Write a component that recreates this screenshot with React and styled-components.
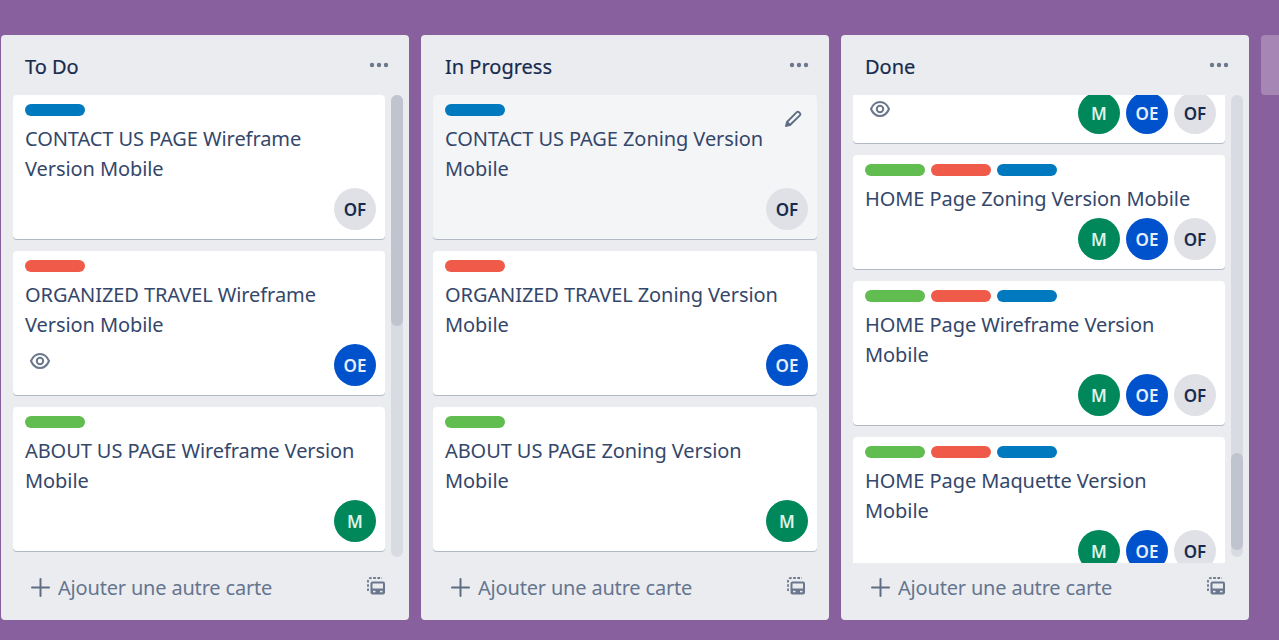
import React from "react";
import styled, { createGlobalStyle } from "styled-components";

const Global = createGlobalStyle`
  html, body { margin: 0; padding: 0; height: 100%; overflow: hidden; }
  body { background: #89609e; font-family: "Noto Sans", "Open Sans", sans-serif; }
`;
const Board = styled.div`
  display: flex; align-items: flex-start; gap: 12px;
  width: 1279px; height: 640px; box-sizing: border-box;
  padding: 35px 0 0 1px; overflow: hidden;
`;
const List = styled.section`
  flex: 0 0 408px; height: 585px; background: #ebecf0; border-radius: 4px;
  display: flex; flex-direction: column; overflow: hidden;
`;
const AddList = styled.div`
  flex: 0 0 408px; height: 60px; border-radius: 4px; background: rgba(255,255,255,.24);
`;
const ListHeader = styled.header`
  height: 60px; flex: none; display: flex; justify-content: space-between;
  padding: 0 20px 0 24px; box-sizing: border-box;
`;
const ListTitle = styled.h2`
  margin: 18px 0 0; font-size: 20px; line-height: 28px; font-weight: 400; color: #172b4d;
  -webkit-text-stroke: 0.2px #172b4d;
`;
const More = styled.svg`width: 20px; height: 6px; margin-top: 27px; fill: #6b778c;`;
const Middle = styled.div`
  flex: none; height: 468px; display: flex; overflow: hidden;
`;
const Cards = styled.div`
  width: ${p => p.$wide ? 384 : 372}px; margin-left: 12px; overflow: hidden; flex: none;
`;
const CardStack = styled.div`
  display: flex; flex-direction: column; gap: 12px; margin-top: ${p => p.$offset || 0}px; padding-bottom: 1px;
`;
const Card = styled.article`
  position: relative; flex: none; background: ${p => p.$hover ? "#f4f5f7" : "#fff"};
  border-radius: 4px; box-shadow: 0 1px 0 rgba(9,30,66,.25);
  padding: 9px 9px 9px 12px;
`;
const Labels = styled.div`display: flex; gap: 6px; margin-bottom: 8px;`;
const Label = styled.span`
  width: 60px; height: 12px; border-radius: 6px; background: ${p => p.$c};
`;
const CardTitle = styled.div`
  font-size: 20px; line-height: 30px; color: #34476a; margin-bottom: 4px;
  padding-right: 16px; letter-spacing: -0.08px;
`;
const Footer = styled.div`display: flex; justify-content: space-between; height: 42px;`;
const Badges = styled.div`padding: 6px 0 0 4px;`;
const EyeIcon = styled.svg`display: block; width: 22px; height: 22px; color: #6b778c;`;
const Avatars = styled.div`display: flex; gap: 6px;`;
const Avatar = styled.span`
  width: 42px; height: 42px; border-radius: 50%; display: flex; align-items: center; justify-content: center;
  font-size: 17px; font-weight: 600; background: ${p => p.$bg}; color: ${p => p.$fg};
`;
const Pencil = styled.svg`
  position: absolute; top: 14px; right: 14px; width: 20px; height: 20px; color: #5e6c84;
`;
const Scrollbar = styled.div`
  width: 12px; height: 462px; margin-left: 6px; flex: none; border-radius: 6px; background: #d9dbe3;
  padding-top: ${p => p.$top}px; box-sizing: border-box;
`;
const Thumb = styled.div`height: ${p => p.$h}px; background: #bfc4ce; border-radius: 6px;`;
const Composer = styled.footer`
  flex: 1; display: flex; align-items: center; justify-content: space-between;
  padding: 0 24px 8px 30px; box-sizing: border-box;
`;
const AddButton = styled.div`
  display: flex; align-items: center; gap: 8px; color: #66758f; font-size: 20px; letter-spacing: -0.18px;
`;
const PlusIcon = styled.svg`width: 19px; height: 19px; color: #5e6c84;`;
const TemplateIcon = styled.svg`width: 18px; height: 18px; color: #6b778c; margin-top: -4px;`;

const BLUE = "#0079bf", RED = "#ef5b48", GREEN = "#61bd4f";
const people = {
  M: ["#00875a", "#dff3ea"],
  OE: ["#0052cc", "#e6eefc"],
  OF: ["#dfe1e6", "#172b4d"],
};

const Eye = () => (
  <EyeIcon viewBox="0 0 22 22" fill="none" stroke="currentColor">
    <path strokeWidth="2" d="M2 11C3.800 6.800 7 4 11 4s7.200 2.800 9 7c-1.800 4.200-5 7-9 7s-7.200-2.800-9-7z" />
    <circle strokeWidth="2" cx="11" cy="11" r="3.200" />
  </EyeIcon>
);

const CardView = ({ labels, title, who, eye, hover }) => (
  <Card $hover={hover}>
    {labels && <Labels>{labels.map(c => <Label key={c} $c={c} />)}</Labels>}
    {title && <CardTitle>{title}</CardTitle>}
    {hover && (
      <Pencil viewBox="0 0 20 20" fill="none" stroke="currentColor" strokeWidth="1.9">
        <path d="M4 13 13.800 3.200a1.500 1.500 0 0 1 2.100 0l1 1a1.500 1.500 0 0 1 0 2.100L7 16z" strokeLinejoin="round" />
        <path d="M2.500 17.500 3.500 13l3.500 3.500z" fill="currentColor" strokeWidth="1" />
      </Pencil>
    )}
    <Footer>
      <Badges>{eye ? <Eye /> : null}</Badges>
      <Avatars>
        {who.map(w => <Avatar key={w} $bg={people[w][0]} $fg={people[w][1]}>{w}</Avatar>)}
      </Avatars>
    </Footer>
  </Card>
);

const Column = ({ title, cards, offset, top, thumb, noScroll }) => (
  <List>
    <ListHeader>
      <ListTitle>{title}</ListTitle>
      <More viewBox="0 0 20 6"><circle cx="3" cy="3" r="2.200" /><circle cx="10" cy="3" r="2.200" /><circle cx="17" cy="3" r="2.200" /></More>
    </ListHeader>
    <Middle>
      <Cards $wide={noScroll}>
        <CardStack $offset={offset}>
          {cards.map((c, i) => <CardView key={i} {...c} />)}
        </CardStack>
      </Cards>
      {!noScroll && <Scrollbar $top={top}><Thumb $h={thumb} /></Scrollbar>}
    </Middle>
    <Composer>
      <AddButton>
        <PlusIcon viewBox="0 0 19 19" stroke="currentColor" strokeWidth="2" strokeLinecap="round"><path d="M9.500 1v17M1 9.500h17" /></PlusIcon>
        Ajouter une autre carte
      </AddButton>
      <TemplateIcon viewBox="0 0 18 18" fill="none">
        <path d="M1 14V4a3 3 0 0 1 3-3h11" stroke="currentColor" strokeWidth="1.800" strokeDasharray="2.600 1.600" />
        <rect x="3.500" y="4.500" width="14.500" height="13" rx="2" fill="currentColor" />
        <rect x="5.500" y="6.500" width="10.500" height="5" fill="#ebecf0" />
        <rect x="6" y="13.800" width="2.500" height="1.500" fill="#ebecf0" />
        <rect x="13" y="13.800" width="2.500" height="1.500" fill="#ebecf0" />
      </TemplateIcon>
    </Composer>
  </List>
);

const all = [GREEN, RED, BLUE];
const team = ["M", "OE", "OF"];
const todo = [
  { labels: [BLUE], title: "CONTACT US PAGE Wireframe Version Mobile", who: ["OF"] },
  { labels: [RED], title: "ORGANIZED TRAVEL Wireframe Version Mobile", who: ["OE"], eye: true },
  { labels: [GREEN], title: "ABOUT US PAGE Wireframe Version Mobile", who: ["M"] },
];
const progress = [
  { labels: [BLUE], title: "CONTACT US PAGE Zoning Version Mobile", who: ["OF"], hover: true },
  { labels: [RED], title: "ORGANIZED TRAVEL Zoning Version Mobile", who: ["OE"] },
  { labels: [GREEN], title: "ABOUT US PAGE Zoning Version Mobile", who: ["M"] },
];
const done = [
  { who: team, eye: true },
  { labels: all, title: "HOME Page Zoning Version Mobile", who: team },
  { labels: all, title: "HOME Page Wireframe Version Mobile", who: team },
  { labels: all, title: "HOME Page Maquette Version Mobile", who: team },
];

export default function App() {
  return (
    <>
      <Global />
      <Board>
        <Column title="To Do" cards={todo} top={0} thumb={231} />
        <Column title="In Progress" cards={progress} noScroll />
        <Column title="Done" cards={done} offset={-12} top={358} thumb={97} />
        <AddList />
      </Board>
    </>
  );
}
